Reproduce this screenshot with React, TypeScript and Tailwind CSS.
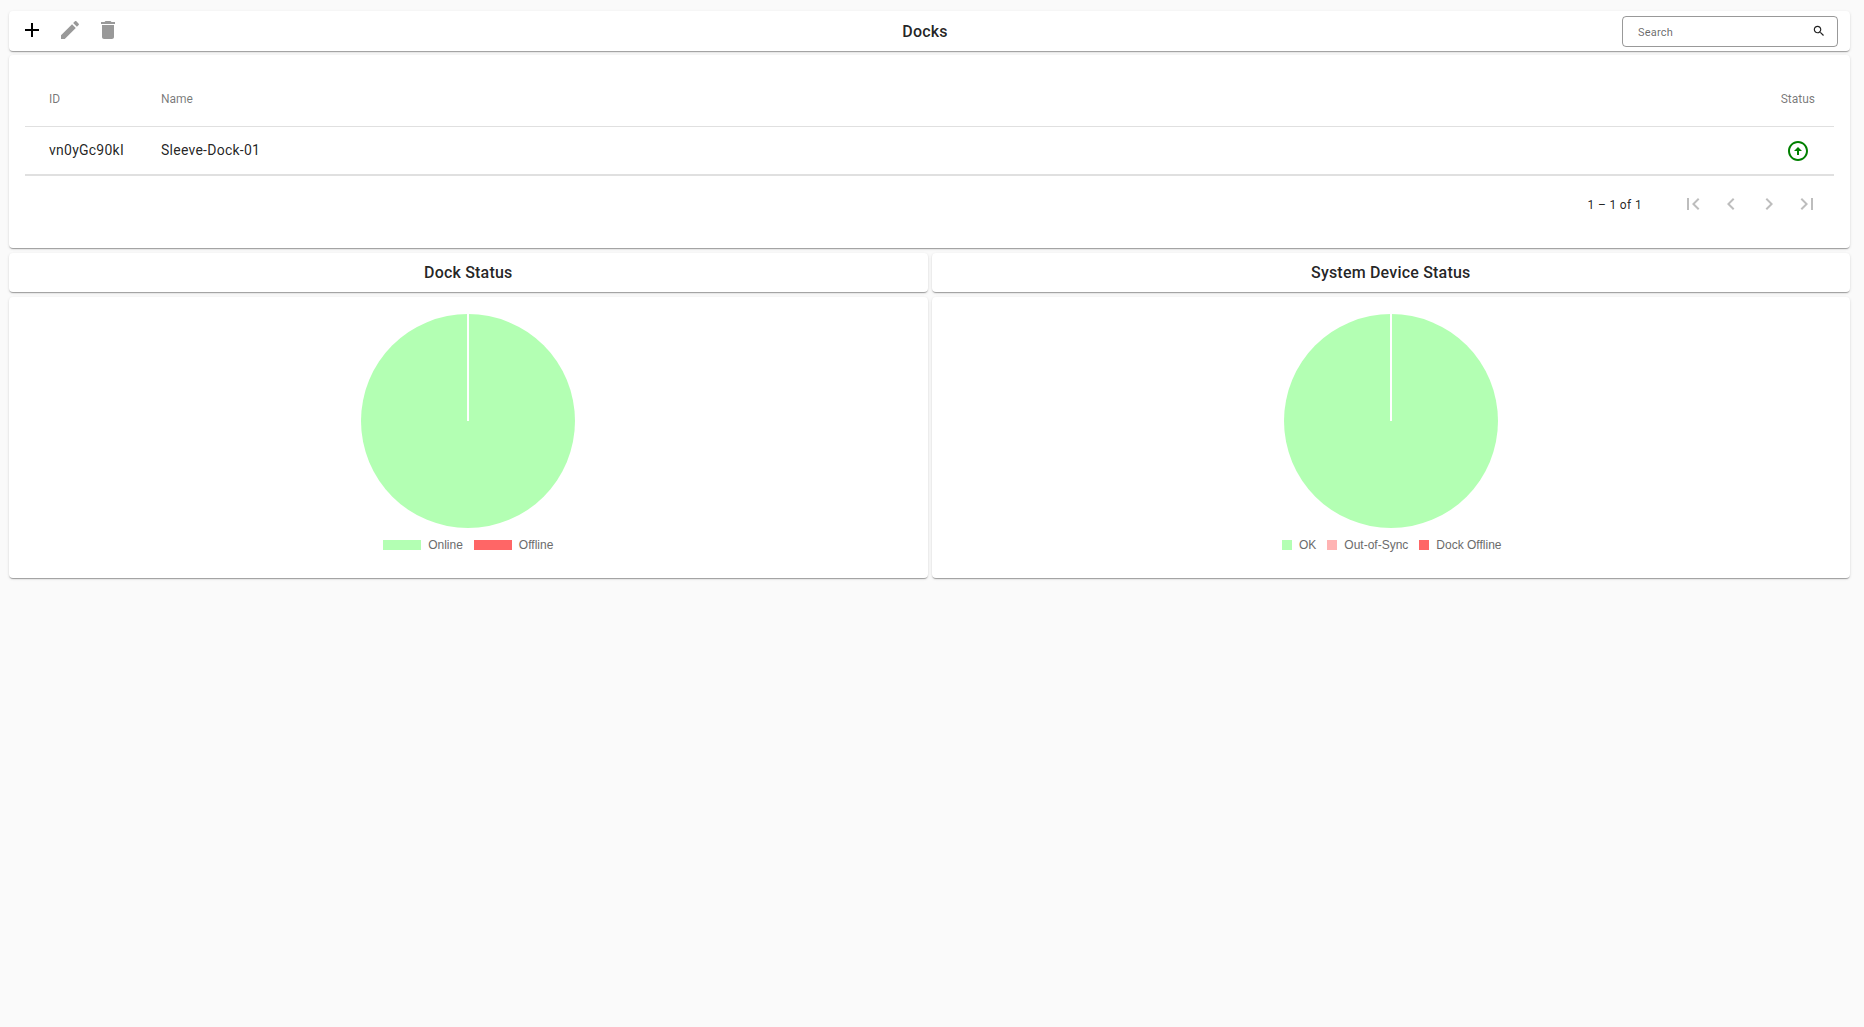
import React from 'react';

const cardClass = 'bg-white rounded-[4px] shadow-[0_2px_1px_-1px_rgba(0,0,0,0.2),0_1px_1px_0_rgba(0,0,0,0.14),0_1px_3px_0_rgba(0,0,0,0.12)]';

const Icon: React.FC<{ d: string; className?: string; size?: number }> = ({ d, className, size = 24 }) => (
    <svg width={size} height={size} viewBox="0 0 24 24" fill="currentColor" className={className}>
        <path d={d} />
    </svg>
);

const paths = {
    add: 'M19 13h-6v6h-2v-6H5v-2h6V5h2v6h6v2z',
    edit: 'M3 17.25V21h3.75L17.81 9.94l-3.75-3.75L3 17.25zM20.71 7.04c.39-.39.39-1.02 0-1.41l-2.34-2.34c-.39-.39-1.02-.39-1.41 0l-1.83 1.83 3.75 3.75 1.83-1.83z',
    trash: 'M6 19c0 1.1.9 2 2 2h8c1.1 0 2-.9 2-2V7H6v12zM19 4h-3.5l-1-1h-5l-1 1H5v2h14V4z',
    search: 'M15.5 14h-.79l-.28-.27C15.41 12.59 16 11.11 16 9.5 16 5.91 13.09 3 9.5 3S3 5.91 3 9.5 5.91 16 9.5 16c1.61 0 3.09-.59 4.23-1.57l.27.28v.79l5 4.99L20.49 19l-4.99-5zm-6 0C7.01 14 5 11.99 5 9.5S7.01 5 9.5 5 14 7.01 14 9.5 11.99 14 9.5 14z',
    statusUp: 'M12 20c-4.41 0-8-3.59-8-8s3.59-8 8-8 8 3.59 8 8-3.59 8-8 8zm0 2c5.52 0 10-4.48 10-10S17.52 2 12 2 2 6.48 2 12s4.48 10 10 10zm-1-10v4h2v-4h3l-4-4-4 4h3z',
    first: 'M18.41 16.59L13.82 12l4.59-4.59L17 6l-6 6 6 6zM6 6h2v12H6z',
    prev: 'M15.41 7.41L14 6l-6 6 6 6 1.41-1.41L10.83 12z',
    next: 'M10 6L8.59 7.41 13.17 12l-4.58 4.59L10 18l6-6z',
    last: 'M5.59 7.41L10.18 12l-4.59 4.59L7 18l6-6-6-6zM16 6h2v12h-2z',
};

const Toolbar = () => (
    <div className={`${cardClass} h-10 flex items-center`}>
        <div className="w-[228px] flex items-center gap-[14px] pl-[11px] -mt-[2px]">
            <Icon d={paths.add} className="text-black" />
            <Icon d={paths.edit} className="text-black/40" />
            <Icon d={paths.trash} className="text-black/40" />
        </div>
        <div className="flex-1 text-center text-[16px] font-medium tracking-[0.2px] text-black/87 pr-[9px] pt-[1px]">Docks</div>
        <div className="w-[216px] h-[31px] mr-3 border border-black/40 rounded-[4px] flex items-center justify-between pl-[15px] pr-[11px]">
            <span className="text-[11px] tracking-[0.2px] text-black/60 pt-1">Search</span>
            <Icon d={paths.search} size={14} className="text-black/87" />
        </div>
    </div>
);

const DocksTable = () => (
    <div className={`${cardClass} h-[193px] mt-1 px-4`}>
        <div className="h-[72px] flex items-center border-b border-black/12 text-[12px] font-normal text-black/54 pt-4">
            <span className="pl-6 w-[136px]">ID</span>
            <span className="flex-1">Name</span>
            <span className="pr-[19px]">Status</span>
        </div>
        <div className="h-[49px] flex items-center border-b-2 border-black/12 text-[14px] tracking-[0.25px] text-black/87">
            <span className="pl-6 w-[136px]">vn0yGc90kI</span>
            <span className="flex-1">Sleeve-Dock-01</span>
            <Icon d={paths.statusUp} className="text-[#008000] mr-6" />
        </div>
        <div className="flex items-center justify-end h-[56px] text-[12px] tracking-[0.35px] text-black/87">
            <span className="pt-[2px]">1 – 1 of 1</span>
            <div className="flex items-center gap-[14px] ml-[39px] mr-[15px] text-black/26">
                <Icon d={paths.first} />
                <Icon d={paths.prev} />
                <Icon d={paths.next} />
                <Icon d={paths.last} />
            </div>
        </div>
    </div>
);

interface LegendItem {
    label: string;
    color: string;
}

const Pie = () => (
    <svg width="216" height="216" viewBox="0 0 216 216" className="block">
        <circle cx="108" cy="108" r="107" fill="#b3ffb3" />
        <line x1="108" y1="108" x2="108" y2="0" stroke="#ffffff" strokeWidth="2" />
    </svg>
);

const ChartPanel: React.FC<{ title: string; legend: LegendItem[]; swatchClass: string; legendClass?: string }> = ({ title, legend, swatchClass, legendClass }) => (
    <div className="flex-1 min-w-0">
        <div className={`${cardClass} h-[39px] flex items-center justify-center text-[16px] font-medium tracking-[0.2px] text-black/87`}>{title}</div>
        <div className={`${cardClass} h-[281px] mt-[5px] flex flex-col items-center pt-4`}>
            <Pie />
            <div className={`flex items-center justify-center gap-[11px] mt-[9px] h-[14px] font-['Liberation_Sans',sans-serif] text-[12px] text-[#6b6b6b] ${legendClass ?? ''}`}>
                {legend.map(item => (
                    <div key={item.label} className="flex items-center gap-[7px]">
                        <span className={`${swatchClass} h-[10px] block`} style={{ backgroundColor: item.color }} />
                        <span>{item.label}</span>
                    </div>
                ))}
            </div>
        </div>
    </div>
);

export default function App() {
    return (
        <div className="min-h-screen bg-[#fafafa] pl-[9px] pr-[14px] pt-[11px] font-['Roboto',sans-serif]">
            <Toolbar />
            <DocksTable />
            <div className="flex gap-1 mt-[5px]">
                <ChartPanel
                    title="Dock Status"
                    swatchClass="w-[38px]"
                    legend={[
                        { label: 'Online', color: '#b3ffb3' },
                        { label: 'Offline', color: '#ff6666' },
                    ]}
                />
                <ChartPanel
                    title="System Device Status"
                    swatchClass="w-[10px]"
                    legendClass="ml-[2px]"
                    legend={[
                        { label: 'OK', color: '#b3ffb3' },
                        { label: 'Out-of-Sync', color: '#ffb3b3' },
                        { label: 'Dock Offline', color: '#ff6666' },
                    ]}
                />
            </div>
        </div>
    );
}
